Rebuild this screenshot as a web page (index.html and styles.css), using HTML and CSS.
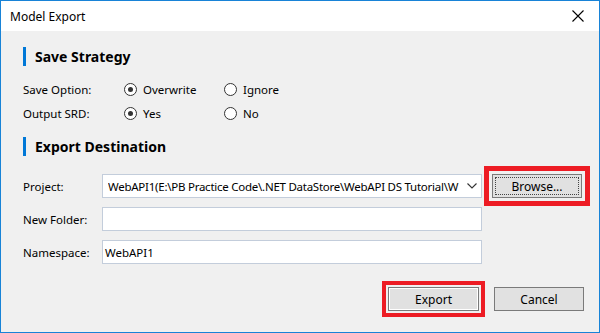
FILE: index.html
```html
<!DOCTYPE html>
<html lang="en">
<head>
    <meta charset="UTF-8">
    <meta name="viewport" content="width=device-width, initial-scale=1.0">
    <title>Model Export</title>
    <link rel="stylesheet" href="styles.css">
</head>
<body>
    <div class="window">
        <div class="titlebar">
            <span class="title">Model Export</span>
            <svg class="close" width="12" height="12" viewBox="0 0 12 12">
                <path d="M0.5 0.5 L11.5 11.5 M11.5 0.5 L0.5 11.5" stroke="#000" stroke-width="1.1" fill="none"/>
            </svg>
        </div>

        <div class="content">
            <h2 class="section">Save Strategy</h2>
            <div class="opt-row">
                <span class="opt-label">Save Option:</span>
                <label class="radio"><span class="circle checked"></span>Overwrite</label>
                <label class="radio"><span class="circle"></span>Ignore</label>
            </div>
            <div class="opt-row">
                <span class="opt-label">Output SRD:</span>
                <label class="radio"><span class="circle checked"></span>Yes</label>
                <label class="radio"><span class="circle"></span>No</label>
            </div>

            <h2 class="section second">Export Destination</h2>
            <div class="form">
                <div class="field">
                    <span class="field-label">Project:</span>
                    <div class="combo">
                        <span class="combo-text">WebAPI1(E:\PB Practice Code\.NET DataStore\WebAPI DS Tutorial\W</span>
                        <svg class="chevron" width="10" height="6" viewBox="0 0 10 6">
                            <polyline points="0.5,0.5 5,5 9.5,0.5" stroke="#333" stroke-width="1.1" fill="none"/>
                        </svg>
                    </div>
                    <button class="btn browse marked-lg"><span class="focus">Browse...</span></button>
                </div>
                <div class="field">
                    <span class="field-label">New Folder:</span>
                    <div class="textbox"></div>
                </div>
                <div class="field">
                    <span class="field-label">Namespace:</span>
                    <div class="textbox">WebAPI1</div>
                </div>
            </div>

            <div class="footer">
                <button class="btn default marked">Export</button>
                <button class="btn">Cancel</button>
            </div>
        </div>
    </div>
</body>
</html>
```

FILE: styles.css
```css
body {
    margin: 0;
    font-family: "Noto Sans", "Open Sans", sans-serif;
    font-size: 11.5px;
    color: #000;
    background-color: #f0f0f0;
}
.window {
    width: 600px;
    height: 333px;
    box-sizing: border-box;
    border: 1px solid #1883d7;
    background-color: #f0f0f0;
    display: flex;
    flex-direction: column;
}
.titlebar {
    height: 30px;
    background-color: #fff;
    display: flex;
    align-items: center;
    justify-content: space-between;
    padding: 0 15px 0 9px;
}
.title {
    font-size: 12px;
    margin-top: 1px;
}
.close {
    display: block;
}
.content {
    padding: 16px 15px 0 22px;
}
.section {
    margin: 0;
    height: 19px;
    line-height: 19px;
    border-left: 3px solid #0078d7;
    padding-left: 9px;
    font-size: 14px;
    font-weight: bold;
}
.section.second {
    margin-top: 12px;
}
.opt-row {
    display: flex;
    align-items: center;
    height: 24px;
}
.section + .opt-row {
    margin-top: 11px;
}
.opt-label {
    width: 101px;
}
.radio {
    width: 100px;
    display: flex;
    align-items: center;
}
.circle {
    width: 11px;
    height: 11px;
    border: 1px solid #333;
    border-radius: 50%;
    background-color: #fff;
    margin-right: 6px;
    position: relative;
}
.circle.checked::after {
    content: "";
    position: absolute;
    left: 3px;
    top: 3px;
    width: 5px;
    height: 5px;
    border-radius: 50%;
    background-color: #333;
}
.form {
    margin-top: 18px;
    display: flex;
    flex-direction: column;
    gap: 9px;
}
.field {
    display: flex;
    align-items: center;
    height: 24px;
}
.field-label {
    width: 79px;
}
.combo, .textbox {
    width: 380px;
    height: 24px;
    box-sizing: border-box;
    border: 1px solid #c3cddb;
    background-color: #fff;
    display: flex;
    align-items: center;
}
.combo {
    padding: 0 4px 0 5px;
}
.combo-text {
    flex: 1;
    overflow: hidden;
    white-space: nowrap;
    letter-spacing: -0.25px;
}
.chevron {
    margin-left: 1px;
    flex: none;
}
.textbox {
    padding-left: 2px;
}
.btn {
    width: 90px;
    height: 24px;
    box-sizing: border-box;
    border: 1px solid #7a7a7a;
    background-color: #e1e1e1;
    font-family: inherit;
    font-size: 12px;
    color: #000;
    padding: 0;
}
.browse {
    margin-left: 10px;
    padding: 2px;
}
.focus {
    display: flex;
    align-items: center;
    justify-content: center;
    height: 100%;
    box-sizing: border-box;
    border: 1px dotted #444;
}
.default {
    width: 91px;
    box-shadow: inset 0 0 0 1px #fff;
}
.marked {
    outline: 4px solid #ed1c24;
    outline-offset: 2px;
}
.marked-lg {
    outline: 5px solid #ed1c24;
    outline-offset: 3px;
}
.footer {
    margin-top: 23px;
    display: flex;
    justify-content: flex-end;
    gap: 15px;
}
```
